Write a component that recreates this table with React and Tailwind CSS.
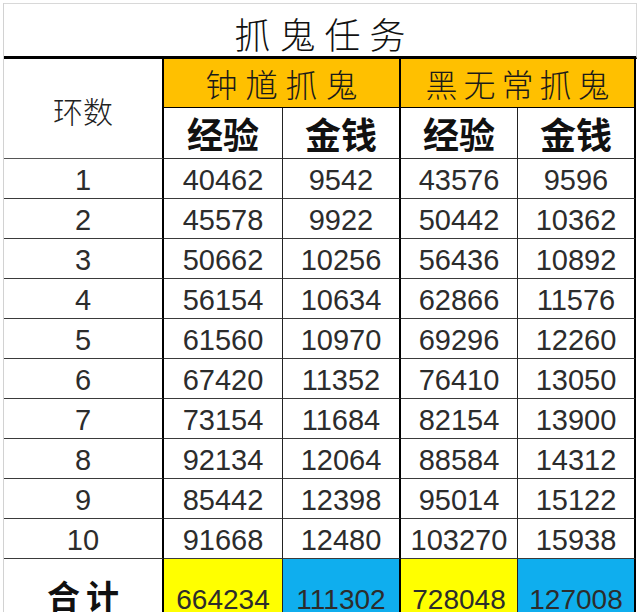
import React from 'react';

const rows = [
  [1, 40462, 9542, 43576, 9596],
  [2, 45578, 9922, 50442, 10362],
  [3, 50662, 10256, 56436, 10892],
  [4, 56154, 10634, 62866, 11576],
  [5, 61560, 10970, 69296, 12260],
  [6, 67420, 11352, 76410, 13050],
  [7, 73154, 11684, 82154, 13900],
  [8, 92134, 12064, 88584, 14312],
  [9, 85442, 12398, 95014, 15122],
  [10, 91668, 12480, 103270, 15938],
];

const totals = [664234, 111302, 728048, 127008];

const cjk = { fontFamily: '"Noto Sans CJK SC", sans-serif' };
const num = { fontFamily: '"Liberation Sans", Arial, sans-serif' };

// widths incl. right border: 160 | 119 | 118 | 117 | 118
const colCls = [
  'w-[160px] border-r-2 border-r-black',
  'w-[119px] border-r border-r-[#222]',
  'w-[118px] border-r-2 border-r-black',
  'w-[117px] border-r border-r-[#222]',
  'w-[118px] border-r-2 border-r-black',
];

const App = () => {
  return (
    <div className="w-[640px] h-[612px] overflow-hidden bg-white pt-[3px] pl-[3px]">
      <div className="w-[634px] border-l border-l-[#d2d2d2]">
        {/* title */}
        <div
          className="h-[56px] border-t border-t-[#d8d8d8] border-r border-r-[#d8d8d8] border-b-[3px] border-b-black flex items-end justify-center pb-[1px]"
          style={cjk}
        >
          <span className="text-[36px] leading-[44px] tracking-[9px] pl-[9px] text-[#111] font-light">抓鬼任务</span>
        </div>

        {/* header */}
        <div className="flex h-[100px]">
          <div
            className={`${colCls[0]} border-b border-b-[#555] flex items-center justify-center pt-[4px]`}
            style={cjk}
          >
            <span className="text-[30px] text-[#222] font-light">环数</span>
          </div>
          <div className="flex flex-col">
            <div className="flex h-[49px]" style={cjk}>
              <div className="w-[237px] bg-[#FFC000] border-r-2 border-r-black border-b border-b-black flex items-center justify-center">
                <span className="text-[32px] leading-none tracking-[8px] pl-[8px] text-[#1a1a1a] font-light">钟馗抓鬼</span>
              </div>
              <div className="w-[235px] bg-[#FFC000] border-r-2 border-r-black border-b border-b-black flex items-center justify-center">
                <span className="text-[32px] leading-none tracking-[6px] pl-[6px] text-[#1a1a1a] font-light">黑无常抓鬼</span>
              </div>
            </div>
            <div className="flex h-[51px]" style={cjk}>
              {['经验', '金钱', '经验', '金钱'].map((t, i) => (
                <div
                  key={i}
                  className={`${colCls[i + 1]} border-b border-b-[#333] flex items-center justify-center`}
                >
                  <span className="text-[36px] leading-none font-bold text-[#111]">{t}</span>
                </div>
              ))}
            </div>
          </div>
        </div>

        {/* data rows */}
        {rows.map((r) => (
          <div key={r[0]} className="flex h-[40px]" style={num}>
            {r.map((v, i) => (
              <div
                key={i}
                className={`${colCls[i]} border-b border-b-[#3a3a3a] flex items-center justify-center pt-[3px]`}
              >
                <span className="text-[29px] leading-none text-[#2c2c2c]">{v}</span>
              </div>
            ))}
          </div>
        ))}

        {/* totals */}
        <div className="flex h-[90px]">
          <div className={`${colCls[0]} flex items-start justify-center pt-[20px]`} style={cjk}>
            <span className="text-[33px] leading-none font-bold tracking-[6px] pl-[6px] text-[#111]">合计</span>
          </div>
          {totals.map((v, i) => (
            <div
              key={i}
              className={`${colCls[i + 1]} ${i % 2 === 0 ? 'bg-[#FFFF00]' : 'bg-[#0FAEEE]'} flex items-start justify-center pt-[27px]`}
              style={num}
            >
              <span className="text-[28px] leading-none text-[#2c2c2c]">{v}</span>
            </div>
          ))}
        </div>
      </div>
    </div>
  );
};

export default App;
